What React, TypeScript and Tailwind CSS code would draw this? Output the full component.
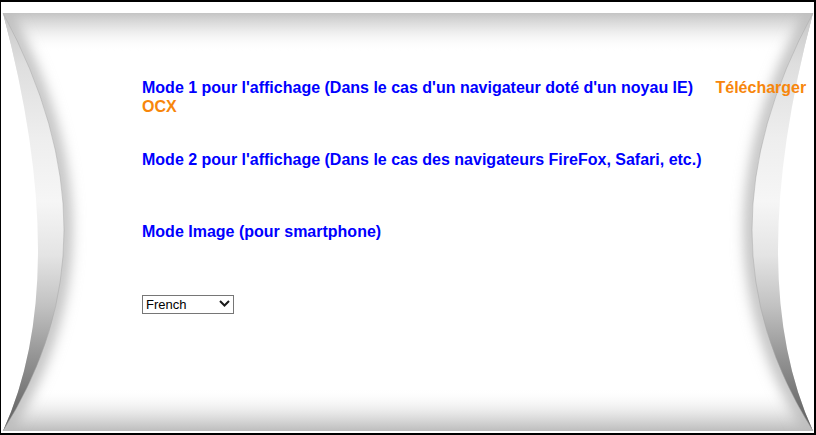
import React from "react";

function PillowBackground() {
  return (
    <svg
      className="absolute left-[-1px] top-[-2px] h-[435px] w-[816px]"
      viewBox="0 0 816 435"
      aria-hidden="true"
    >
      <defs>
        <clipPath id="pillow">
          <path d="M3,13 L813,13 Q743,278 813,431 L3,431 Q73,278 3,13 Z" />
        </clipPath>
        <linearGradient id="topG" x1="0" y1="13" x2="0" y2="52" gradientUnits="userSpaceOnUse">
          <stop offset="0" stopColor="#c4c4c4" stopOpacity="1" />
          <stop offset="0.35" stopColor="#dcdcdc" stopOpacity="0.8" />
          <stop offset="1" stopColor="#ffffff" stopOpacity="0" />
        </linearGradient>
        <linearGradient id="botG" x1="0" y1="388" x2="0" y2="431" gradientUnits="userSpaceOnUse">
          <stop offset="0" stopColor="#ffffff" stopOpacity="0" />
          <stop offset="0.6" stopColor="#e2e2e2" stopOpacity="0.9" />
          <stop offset="1" stopColor="#bdbdbd" stopOpacity="1" />
        </linearGradient>
        <linearGradient id="bandG" x1="0" y1="13" x2="0" y2="431" gradientUnits="userSpaceOnUse">
          <stop offset="0" stopColor="#c6c6c6" />
          <stop offset="0.12" stopColor="#dedede" />
          <stop offset="0.3" stopColor="#eeeeee" />
          <stop offset="0.45" stopColor="#f6f6f6" />
          <stop offset="0.58" stopColor="#e4e4e4" />
          <stop offset="0.7" stopColor="#c2c2c2" />
          <stop offset="0.82" stopColor="#959595" />
          <stop offset="0.93" stopColor="#727272" />
          <stop offset="1" stopColor="#5e5e5e" />
        </linearGradient>
        <filter id="blur" x="-50%" y="-10%" width="200%" height="120%">
          <feGaussianBlur stdDeviation="7" />
        </filter>
      </defs>

      <g clipPath="url(#pillow)">
        <rect x="0" y="0" width="816" height="435" fill="#ffffff" />
        <rect x="0" y="13" width="816" height="40" fill="url(#topG)" />
        <rect x="0" y="388" width="816" height="43" fill="url(#botG)" />
        <path d="M3,13 Q125,238 3,431" fill="none" stroke="#b8b8b8" strokeWidth="14" filter="url(#blur)" />
        <path d="M813,13 Q691,238 813,431" fill="none" stroke="#b8b8b8" strokeWidth="14" filter="url(#blur)" />
      </g>

      <path d="M3,13 Q73,278 3,431 Q125,238 3,13 Z" fill="url(#bandG)" />
      <path d="M813,13 Q743,278 813,431 Q691,238 813,13 Z" fill="url(#bandG)" />
      <path d="M3,13 Q125,238 3,431" fill="none" stroke="#a8a8a8" strokeOpacity="0.5" strokeWidth="1" />
      <path d="M813,13 Q691,238 813,431" fill="none" stroke="#a8a8a8" strokeOpacity="0.5" strokeWidth="1" />
    </svg>
  );
}

export default function App() {
  return (
    <div
      className="relative h-[435px] w-[816px] overflow-hidden border-b-2 border-l border-r-2 border-t-2 border-black bg-white"
      style={{ fontFamily: '"Liberation Sans", Arial, sans-serif' }}
    >
      <PillowBackground />
      <div className="relative flex flex-col pl-[141px] pt-[76px] text-[16px] font-bold leading-[19px]">
        <div className="text-[#0000ff]">
          Mode 1 pour l'affichage (Dans le cas d'un navigateur doté d'un noyau IE){" "}
          <a href="#" className="ml-[18px] text-[#f7860b]">
            Télécharger OCX
          </a>
        </div>
        <a href="#" className="mt-[34px] self-start text-[#0000ff]">
          Mode 2 pour l'affichage (Dans le cas des navigateurs FireFox, Safari, etc.)
        </a>
        <a href="#" className="mt-[53px] self-start text-[#0000ff]">
          Mode Image (pour smartphone)
        </a>
        <div className="relative mt-[53px] h-[19px] w-[92px]">
          <select
            defaultValue="fr"
            className="h-[19px] w-[92px] appearance-none border border-[#767676] bg-white pl-[3px] text-[13px] font-normal leading-[17px] text-black outline-none"
            style={{ fontFamily: '"Liberation Sans", Arial, sans-serif' }}
          >
            <option value="fr">French</option>
            <option value="en">English</option>
          </select>
          <svg
            className="pointer-events-none absolute right-[4px] top-[6px] h-[7px] w-[11px]"
            viewBox="0 0 11 7"
          >
            <path d="M1,1 L5.5,5.5 L10,1" fill="none" stroke="#1a1a1a" strokeWidth="2" />
          </svg>
        </div>
      </div>
    </div>
  );
}
